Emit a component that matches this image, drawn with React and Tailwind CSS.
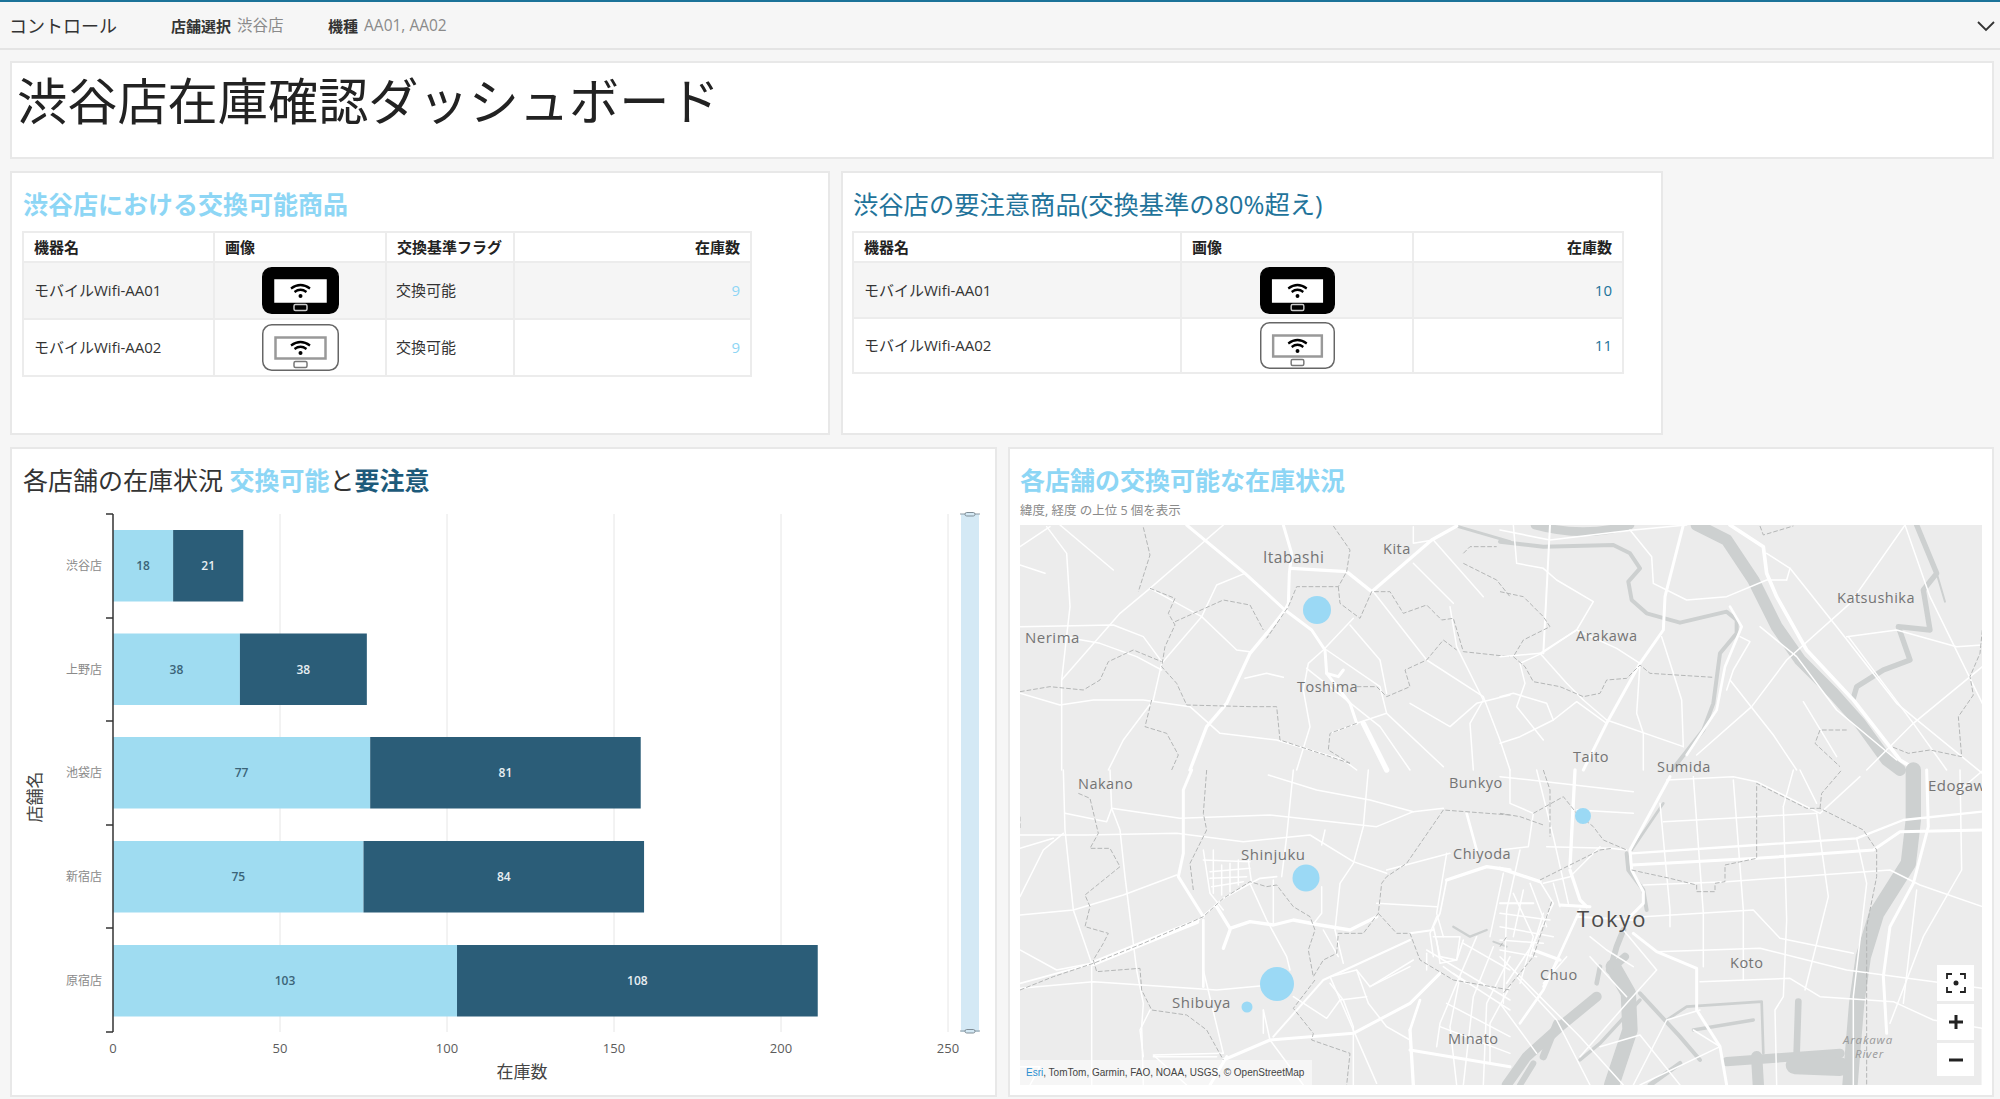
import React from "react";

const LIGHT = "#9fdcf1";
const DARK = "#2b5d78";

function Device({ dark, w = 77 }) {
  return (
    <svg width={w} height="47" viewBox="0 0 77 47" preserveAspectRatio="none" className="block mx-auto">
      <rect x="0.75" y="0.75" width="75.5" height="45.5" rx="9" fill={dark ? "#000" : "#fff"} stroke={dark ? "#000" : "#666"} strokeWidth="1.5" />
      <rect x="13.5" y="13.5" width="50" height="21" fill="#fff" stroke={dark ? "#fff" : "#999"} strokeWidth="2.5" />
      <path d="M29 21.5 Q38.5 14.5 48 21.5 M32.5 25 Q38.5 20.5 44.5 25" fill="none" stroke="#000" strokeWidth="2.2" />
      <circle cx="38.5" cy="29" r="2" fill="#000" />
      <rect x="32" y="37.5" width="13" height="6" rx="1.5" fill={dark ? "#000" : "#fff"} stroke={dark ? "#ccc" : "#777"} strokeWidth="1.5" />
    </svg>
  );
}

function Table({ cols, showFlag, qtyClass, rows, rowHs, iconW }) {
  return (
    <table className="border-collapse table-fixed text-[15px] text-[#333]" style={{ width: cols.reduce((a, b) => a + b, 0) }}>
      <colgroup>
        {cols.map((c, i) => (
          <col key={i} style={{ width: c }} />
        ))}
      </colgroup>
      <thead>
        <tr className="h-[30px]">
          <th className="border-2 border-[#ececec] px-[10px] text-left font-bold text-[15px] text-[#222]">機器名</th>
          <th className="border-2 border-[#ececec] px-[10px] text-left font-bold text-[15px] text-[#222]">画像</th>
          {showFlag && <th className="border-2 border-[#ececec] px-[10px] text-left font-bold text-[15px] text-[#222]">交換基準フラグ</th>}
          <th className="border-2 border-[#ececec] px-[10px] text-right font-bold text-[15px] text-[#222]">在庫数</th>
        </tr>
      </thead>
      <tbody>
        {rows.map((r, i) => (
          <tr key={i} className={i === 0 ? "bg-[#f5f5f5]" : "bg-white"} style={{ height: rowHs[i] }}>
            <td className="border-2 border-[#ececec] px-[10px] py-0">{r.name}</td>
            <td className="border-2 border-[#ececec] p-0">
              <Device dark={i === 0} w={iconW} />
            </td>
            {showFlag && <td className="border-2 border-[#ececec] px-[9px] py-0">交換可能</td>}
            <td className={`border-2 border-[#ececec] px-[10px] py-0 text-right ${qtyClass}`}>{r.qty}</td>
          </tr>
        ))}
      </tbody>
    </table>
  );
}

const stores = [
  ["渋谷店", 18, 21, 530],
  ["上野店", 38, 38, 633.5],
  ["池袋店", 77, 81, 737],
  ["新宿店", 75, 84, 841],
  ["原宿店", 103, 108, 945],
];

function Chart() {
  const X = (v) => 113 + v * 3.34;
  return (
    <svg width="960" height="590" viewBox="23 505 960 590" className="block ml-[11px] mt-[8px]" fontFamily="'Open Sans','Noto Sans CJK JP',sans-serif">
      {[50, 100, 150, 200, 250].map((v) => (
        <line key={v} x1={X(v)} x2={X(v)} y1="514" y2="1032" stroke="#e6e6e6" strokeWidth="1" />
      ))}
      {stores.map(([n, a, b, y]) => (
        <g key={n}>
          <rect x={X(0)} y={y} width={a * 3.34} height="71.5" fill={LIGHT} />
          <rect x={X(a)} y={y} width={b * 3.34} height="71.5" fill={DARK} />
          <text x={X(a / 2)} y={y + 40} textAnchor="middle" fontSize="12" fontWeight="600" fill="#3b6478">{a}</text>
          <text x={X(a + b / 2)} y={y + 40} textAnchor="middle" fontSize="12" fontWeight="600" fill="#e8eef2">{b}</text>
          <text x="102" y={y + 40} textAnchor="end" fontSize="12" fill="#8a8a8a">{n}</text>
        </g>
      ))}
      <path d="M113 514V1032" stroke="#333" strokeWidth="1.5" />
      {[514, 618, 721, 825, 928, 1032].map((y) => (
        <line key={y} x1="106" x2="113" y1={y} y2={y} stroke="#333" strokeWidth="1.5" />
      ))}
      {[0, 50, 100, 150, 200, 250].map((v) => (
        <text key={v} x={X(v)} y="1053" textAnchor="middle" fontSize="13" fill="#5c5c5c">{v}</text>
      ))}
      <text x="522" y="1078" textAnchor="middle" fontSize="17" fill="#444">在庫数</text>
      <text transform="translate(41 797) rotate(-90)" textAnchor="middle" fontSize="17" fill="#444">店舗名</text>
      <rect x="961" y="514" width="18" height="518" fill="#d4e9f5" />
      {[514, 1031].map((y) => (
        <g key={y}>
          <line x1="960" x2="980" y1={y} y2={y} stroke="#8a99a3" strokeWidth="1" />
          <rect x="965" y={y - 1.5} width="10" height="3.5" rx="1.7" fill="#d4e9f5" stroke="#7f8d96" strokeWidth="1" />
        </g>
      ))}
    </svg>
  );
}

const WATER = "#cdd0d0";
const z5 = {
  major: [
    ["M820 255L845 340L838 400L835 490L825 510L770 580", 9],
    ["M845 385L1010 395L1085 455L1265 300L1340 258", 10],
    ["M530 255L705 400L825 510L905 570L945 630L950 700L1020 790L1040 850", 9],
    ["M1060 850L1130 990", 16],
    ["M770 580L720 640L650 790L590 860L540 990", 10],
    ["M950 700L985 710L1000 690", 9],
  ],
  minor: [
    "M30 320L120 260","M110 260L170 340L180 500L155 720L155 990","M150 255L310 390","M30 375L105 400",
    "M640 255L420 445L330 520L155 720","M420 445L575 530L680 630L720 635","M30 560L310 555L400 590L455 665",
    "M160 590L270 610L380 650L455 690","M30 760L150 795L250 780L400 780L540 800L630 880L800 900L1000 960L1040 990",
    "M705 400L620 435L575 530L455 670L430 780L340 900L295 990","M705 715L770 700L820 712",
    "M950 630L1110 740L1130 820L1300 980","M1030 535L940 630L895 670L880 750L900 860L860 990",
    "M1130 820L1040 850L960 880","M1020 555L1110 660L1130 760","M1320 500L1340 620L1420 780L1380 850L1390 990",
    "M1090 455L1250 660L1420 770L1470 900L1500 990","M1210 370L1330 490","M1500 765L1400 790L1320 860L1200 790",
    "M1210 260V310L1270 300L1420 470","M890 685L1110 860L1200 990",
  ],
  dash: [
    "M400 262L420 345L385 455","M970 258L1020 330L1010 395L985 440L860 440L835 500L770 595",
    "M985 440L990 490L1050 535L1085 455L1140 455L1180 520L1250 495L1295 540L1330 535L1360 635L1500 650",
    "M420 445L495 475L475 520L495 555L465 620L455 680L500 730L530 795L720 800L800 800L810 900L1020 970",
    "M495 545L640 480L720 495L760 570","M30 755L120 740L220 750L270 720L295 665L370 630L455 665",
    "M425 780L405 860L470 880L505 945L485 990","M1360 340L1380 320L1460 320M1360 370L1460 420L1500 470",
    "M1040 740L1100 740L1130 770L1200 740L1185 690L1250 660L1300 600L1340 630","M1040 850L960 880L955 930L1020 970",
  ],
  water: [["M1345 260L1500 305", 9]],
};
const z6 = {
  water: [
    ["M590 255L680 300L760 420L830 560L900 660L1000 760L1080 850L1160 960L1200 990", 36],
    ["M0 305L130 320L340 315L390 340L420 385L385 425L395 480L440 520L540 548L680 515L710 540L710 580L660 640L640 790L610 870L520 985", 12],
    ["M105 255Q250 295 390 255", 26],
    ["M1250 255L1310 400L1270 450L1290 570L1195 560L1230 660L1150 690L1070 740L1060 775", 16],
    ["M1310 400L1335 485", 6],
  ],
  major: [
    ["M690 255L790 320L800 400L830 470L920 630L1060 780L1200 960L1250 990", 11],
    ["M550 255L495 470L490 570L420 670L320 850L250 990", 9],
    ["M560 945L650 810L675 680L725 560L690 500", 8],
    ["M150 255L130 640", 6],
    ["M0 270L150 300L400 270L560 255", 5],
  ],
  minor: [
    "M40 255L50 370L130 385L170 420L280 485L230 570L125 640L60 670","M390 270L455 350L460 430L560 480L680 470L800 420L860 420",
    "M800 340L870 385L860 420","M870 385L1010 560L1190 790L1447 1000","M1215 255L1050 490L860 660L755 800L590 945",
    "M1215 255L1290 470L1447 790","M1040 590L1190 570L1370 620L1447 615","M0 650L120 640L230 570L350 625L420 670",
    "M120 640L200 730L250 780L320 840L550 920","M0 770L40 760L140 790L160 840L230 785L320 850","M420 670L410 820L430 880L430 990",
    "M485 590L520 700L545 780L550 920","M690 720L820 885L890 990","M780 560L890 650L1010 810L1190 960","M1045 590L1240 850L1340 990",
    "M910 785L1010 950","M1447 680L1240 850L1100 990","M720 590L750 605L700 690L680 750","M60 670L75 730L50 800L130 900",
    "M0 910L60 890L160 840",
  ],
  dash: [
    "M0 455L70 470L130 530L150 560L70 600L40 650L75 680L100 725L180 740L250 770L300 760L320 720L380 715L420 675L450 700L640 712",
    "M1447 570L1440 640L1410 710L1420 765L1375 830L1385 950L1290 930L1225 940L1175 920",
    "M1040 870L960 870L945 910L1020 980","M780 258L790 285L880 258",
  ],
};
const z7 = {
  water: [["M1330 470L1380 500L1430 480", 7], ["M1450 515L1490 530", 6]],
  major: [
    ["M250 580L560 455", 15], ["M560 455L640 385L750 325L800 320", 5],
    ["M545 0L520 60L520 250L505 320L580 440", 9],
    ["M620 410L660 475L720 455L790 465L850 450L930 465L1020 480L1100 440", 10],
    ["M660 480L640 535", 10], ["M580 450L580 650", 8],
    ["M640 870L780 810L1030 790L1200 700L1290 610", 9],
    ["M790 800L940 630L1200 510", 6], ["M1200 780L1210 945", 10], ["M1200 840L1500 890", 9],
    ["M1310 330L1430 290L1500 300", 10], ["M1370 130L1400 240", 8], ["M30 640L250 580", 5],
    ["M1200 780L1230 690", 8], ["M600 945L650 860", 9],
    ["M1270 480L1200 490", 6],["M1310 330L1290 430L1270 470L1290 560L1340 570L1360 510",5],
  ],
  minor: [
    "M30 195H230L500 190L700 215L900 195L1030 275L1130 310","M30 235L130 205","M160 0L165 180L190 420L245 580L245 945",
    "M30 435L190 420L340 375L500 315","M30 540L140 600L245 580","M30 655L250 635L620 660L750 648","M165 130L290 155L305 115L510 145L780 135L1100 170L1210 125L1300 115",
    "M305 115L330 180L345 320L380 600L400 700L395 770L400 945","M30 380L100 240L160 190","M300 0L305 115","M850 0L830 200L815 320",
    "M775 15L920 60L1080 90L1210 125","M1075 0L1060 170L1030 280L990 340L975 480","M935 350V430L915 455","M945 180L935 225",
    "M720 340L770 450L830 560L840 600","M790 330L790 460","M1310 250L1280 430L1300 500","M1100 940L960 620L1040 600L1080 650L1200 590",
    "M960 640L1000 690L1030 770L1030 945","M1040 600L1075 700L1130 770L1200 810","M850 680L950 745L990 690L1070 680","M760 720L780 810L880 945",
    "M530 945L430 855L640 850","M580 600L640 850","M420 720L390 780L400 860","M1300 590L1370 640M1250 540L1500 690",
    "M1350 620L1320 770L1340 945","M1400 500L1340 640L1290 760L1280 830","M1450 530L1390 680L1360 945","M1500 560L1430 700L1420 945",
    "M1500 650L1440 760L1440 880","M1270 500H1350L1340 570L1290 580L1280 510","M1280 440L1260 490L1270 560","M610 240V370M635 285V375M660 280V365M685 270V345M715 270L725 340",
    "M580 270L720 275M600 305L720 295M600 325L710 320M605 350L700 335","M580 240L600 370L640 420","M1250 550V600","M30 890H90L60 945","M430 860L620 860",
    "M1360 520L1500 600","M1330 610L1500 720","M1310 700L1500 800","M1290 770L1500 850","M1480 310L1440 500","M1130 300L1320 250","M1100 400L1280 410",
    "M975 480L1000 580","M940 480L985 560","M1080 650L1210 570","M760 720L760 790",
  ],
  dash: [
    "M205 70L240 85L265 190L240 235L300 235L330 290L225 375L240 410L225 470L295 490L280 520L250 570L260 605L390 595L395 660L425 720L530 735L590 780L640 870",
    "M30 660L130 620L250 580L400 520L580 440L640 385L720 335L770 350L800 345L850 410L900 440L915 480L895 540L910 620L940 570L980 550L985 490L1060 490L1105 430L1115 340L1130 320L1190 280L1300 120L1500 135",
    "M590 0L580 130L590 180L540 280L550 360","M915 630L850 715L910 790L905 810L1020 850L1010 945",
    "M1105 430L1160 490L1200 490L1230 570L1330 630L1500 660","M30 140V180",
  ],
};
const z8 = {
  water: [
    ["M1240 0L1240 150L1225 280L1130 430L1090 560L1070 700L1050 945", 46],
    ["M20 945L80 860L180 770L290 680", 30], ["M330 600L375 560", 24],
    ["M340 590L385 670L390 780L335 945", 46], ["M370 480L350 530L330 600", 18],
    ["M420 670L540 800L600 870", 12], ["M500 750L560 710L785 695L790 850", 8], ["M580 780L760 750", 10],
    ["M895 695L890 850", 20], ["M680 875L1020 850", 28], ["M770 860L775 945", 34], ["M885 885L1020 890", 56],
    ["M170 760L130 860", 22], ["M300 590L290 640", 14], ["M240 870L300 820L420 690", 10],
    ["M490 100L395 240", 8], ["M380 250L385 300L430 360L440 420", 12], ["M540 880L450 945", 14], ["M100 880L60 945",18],
  ],
  major: [
    ["M225 0L210 290", 10], ["M210 300L240 390L260 410", 10], ["M0 295L120 335", 10], ["M180 405L270 410", 9],
    ["M510 20L390 240L395 300L430 365L430 400L380 450", 9], ["M400 490L470 545L590 595L590 720L660 830L680 945", 9],
    ["M395 250L770 225L1070 205L1210 150L1447 125", 7], ["M395 285L770 265L1120 240L1200 185L1447 180", 9],
    ["M1280 0L1285 170L1240 340L1170 470L1150 620L1160 790", 9], ["M240 420L130 660L60 760", 8], ["M400 450L230 440", 6],
    ["M100 540L180 570", 10], ["M175 570L130 650", 7], ["M0 400H100", 6],["M120 335L160 400L100 520L20 640",5],
  ],
  minor: [
    "M580 20L610 430L610 590","M700 30L730 420L730 630","M850 110L860 450L850 680L825 720L830 945","M950 130L985 380L915 660",
    "M1070 205L1100 340L1060 680L1060 945","M430 345L680 335L1170 300L1260 345L1447 410","M430 440L760 420L840 505L1060 550",
    "M470 545L780 535L1040 600L1447 655","M600 635L870 625L960 680L1180 695L1300 750L1447 775","M500 30L700 20L770 35L960 130",
    "M490 155L770 140L950 130","M30 0V100L100 130L85 230L0 240","M0 20L400 65","M140 230L330 235L380 240","M300 230L210 320L130 340",
    "M230 120L400 130","M110 0L160 200L205 400","M60 240L20 420L10 700","M1380 0L1385 300L1270 500L1170 760","M1450 0L1380 60",
    "M880 0L850 110","M900 0L950 100","M1080 20L960 130","M370 480L470 600L380 700L240 860","M270 560L380 680","M0 560L240 800L370 945",
    "M50 620L170 750L270 945","M0 700L110 850","M300 830L420 795L540 945","M600 720L500 750L400 945","M580 780L660 830L420 945","M1447 775V945","M1250 360L1210 700",
    "M510 470L510 420L480 100","M130 640L200 560","M0 470L160 500M0 540L110 560","M40 370L100 500L60 640","M90 340L140 470","M160 340L180 410",
    "M270 500L320 540L400 590","M0 430L150 450","M0 510L130 520","M70 360L40 500","M130 430L90 560",
  ],
  dash: [
    "M100 130L190 80L230 130L280 170L310 210L380 240","M130 0L150 60V200","M0 130L60 140L130 165","M120 330L300 240L335 235",
    "M395 300L440 310L510 325L590 345V365H645V340L675 335V285L770 265V40L920 115L960 115L1090 180L1130 240L1130 320L1100 470L1100 945",
    "M960 115L965 70L1025 0","M155 395L100 560L10 670","M0 530L20 500",
  ],
};
const z = [
  [z5, 1010, 440], [z6, 1500, 440], [z7, 1010, 770], [z8, 1500, 770],
];

const labels = [
  ["Itabashi", 1263, 563, 15.5],["Kita", 1383, 554, 14.5],["Nerima", 1025, 643, 15],["Toshima", 1297, 692, 14.5],
  ["Katsushika", 1837, 603, 14.5],["Arakawa", 1576, 641, 14.5],["Taito", 1573, 762, 14.5],["Sumida", 1657, 772, 14.5],
  ["Nakano", 1078, 789, 14.5],["Bunkyo", 1449, 788, 14.5],["Shinjuku", 1241, 860, 15],["Chiyoda", 1453, 859, 14.5],
  ["Shibuya", 1172, 1008, 15],["Minato", 1448, 1044, 14.5],["Chuo", 1540, 980, 14.5],["Koto", 1730, 968, 14.5],["Edogawa", 1928, 791, 15],
];

function MapArt() {
  return (
    <svg width="962" height="560" viewBox="1020 525 962 560" className="block bg-[#ececec]" fontFamily="'Open Sans','Noto Sans',sans-serif">
      {z.map(([m, x, y], i) => (
        <g key={i} transform={`translate(${x} ${y}) scale(.33333)`} fill="none" strokeLinejoin="round" strokeLinecap="round">
          {(m.water || []).map(([d, w], k) => <path key={k} d={d} stroke={WATER} strokeWidth={w} />)}
          {m.minor.map((d, k) => <path key={k} d={d} stroke="#fff" strokeWidth="4.5" />)}
          {m.major.map(([d, w], k) => <path key={k} d={d} stroke="#fff" strokeWidth={w} />)}
          {m.dash.map((d, k) => <path key={k} d={d} stroke="#b4b6b6" strokeWidth="3" strokeDasharray="14 6" strokeLinecap="butt" />)}
        </g>
      ))}
      {labels.map(([t, x, y, s]) => (
        <text key={t} x={x} y={y} fontSize={s} fill="#747474" letterSpacing=".5">{t}</text>
      ))}
      <text x="1577" y="927" fontSize="22" fill="#4a4a4a" letterSpacing="1.8">Tokyo</text>
      <text x="1843" y="1044" fontSize="11.5" fontStyle="italic" fill="#9a9a9a" letterSpacing=".8">Arakawa</text>
      <text x="1855" y="1058" fontSize="11.5" fontStyle="italic" fill="#9a9a9a" letterSpacing=".8">River</text>
      {[[1317, 610, 14], [1306, 878, 13.5], [1277, 984, 17], [1247, 1007, 5.5], [1583, 816, 8]].map(([x, y, r]) => (
        <circle key={x} cx={x} cy={y} r={r} fill="#9bd9f5" />
      ))}
    </svg>
  );
}

function MapBtn({ children, cls }) {
  return <div className={`w-[37px] bg-white flex items-center justify-center ${cls}`}>{children}</div>;
}

export default function App() {
  return (
    <div className="w-[2000px] h-[1099px] overflow-hidden bg-[#f6f6f6] font-['Open_Sans','Noto_Sans_CJK_JP',sans-serif] text-[#222]">
      <header className="h-[50px] border-t-2 border-t-[#1c7399] border-b-2 border-b-[#e4e4e4] flex items-center pl-[9px] pr-[4px] pt-[2px]">
        <span className="text-[18px] text-[#333] w-[162px]">コントロール</span>
        <span className="text-[15px] font-bold text-[#333] mr-[6px]">店舗選択</span>
        <span className="text-[15.5px] text-[#8a8a8a] w-[91px]">渋谷店</span>
        <span className="text-[15px] font-bold text-[#333] mr-[6px]">機種</span>
        <span className="text-[15.5px] text-[#8a8a8a]">AA01, AA02</span>
        <svg width="20" height="12" viewBox="0 0 20 12" className="ml-auto">
          <path d="M2 2l8 8 8-8" fill="none" stroke="#333" strokeWidth="1.8" />
        </svg>
      </header>

      <section className="ml-[10px] mt-[11px] w-[1984px] h-[98px] bg-white border-2 border-[#e8e8e8] pl-[5px] pt-[3px]">
        <h1 className="text-[50.2px] leading-[70px] font-normal text-[#222]">渋谷店在庫確認ダッシュボード</h1>
      </section>

      <div className="ml-[10px] mt-[12px] flex gap-[11px] h-[264px]">
        <section className="w-[820px] bg-white border-2 border-[#e8e8e8] pl-[10px] pt-[14px]">
          <h2 className="text-[25px] leading-[34px] font-bold text-[#8dd6f5] mb-[10px] ml-[1px]">渋谷店における交換可能商品</h2>
          <Table cols={[191, 172, 128, 237]} showFlag qtyClass="text-[#8dd6f5]" rowHs={[57, 57]} rows={[{ name: "モバイルWifi-AA01", qty: 9 }, { name: "モバイルWifi-AA02", qty: 9 }]} />
        </section>
        <section className="w-[822px] bg-white border-2 border-[#e8e8e8] pl-[9px] pt-[14px]">
          <h2 className="text-[25.3px] leading-[34px] text-[#22739a] mb-[10px] ml-[1px]">渋谷店の要注意商品(交換基準の80%超え)</h2>
          <Table cols={[328, 232, 210]} iconW={75} qtyClass="text-[#22739a]" rowHs={[56, 55]} rows={[{ name: "モバイルWifi-AA01", qty: 10 }, { name: "モバイルWifi-AA02", qty: 11 }]} />
        </section>
      </div>

      <div className="ml-[10px] mt-[12px] flex gap-[11px] h-[650px]">
        <section className="w-[987px] bg-white border-2 border-[#e8e8e8] overflow-hidden">
          <h2 className="pl-[11px] pt-[14px] text-[25px] leading-[34px] text-[#333]">
            各店舗の在庫状況 <span className="font-bold text-[#8dd6f5]">交換可能</span>と<span className="font-bold text-[#1d5a7a]">要注意</span>
          </h2>
          <Chart />
        </section>
        <section className="w-[986px] bg-white border-2 border-[#e8e8e8] overflow-hidden">
          <h2 className="pl-[10px] pt-[14px] text-[25px] leading-[34px] font-bold text-[#8dd6f5]">各店舗の交換可能な在庫状況</h2>
          <p className="pl-[10px] mt-[6px] text-[12.5px] leading-[16px] text-[#8a8a8a]">緯度, 経度 の上位 5 個を表示</p>
          <div className="relative ml-[10px] mt-[6px] w-[962px] h-[560px] overflow-hidden">
            <MapArt />
            <div className="absolute left-0 bottom-0 h-[25px] w-[292px] bg-white/50 pl-[6px] text-[10px] leading-[25px] whitespace-nowrap font-['Liberation_Sans',sans-serif] text-[#444]">
              <span className="text-[#2a8fd0]">Esri</span>, TomTom, Garmin, FAO, NOAA, USGS, © OpenStreetMap
            </div>
            <div className="absolute left-[917px] top-[440px] flex flex-col gap-[3px]">
              <MapBtn cls="h-[36px]">
                <svg width="20" height="20" viewBox="0 0 20 20" fill="none" stroke="#222" strokeWidth="1.8">
                  <path d="M1 6V1h5M14 1h5v5M19 14v5h-5M6 19H1v-5" />
                  <circle cx="10" cy="10" r="2.5" fill="#222" stroke="none" />
                </svg>
              </MapBtn>
              <MapBtn cls="h-[36px]">
                <svg width="16" height="16" viewBox="0 0 16 16"><path d="M8 1v14M1 8h14" stroke="#222" strokeWidth="3" /></svg>
              </MapBtn>
              <MapBtn cls="h-[33px]">
                <svg width="16" height="16" viewBox="0 0 16 16"><path d="M1 8h14" stroke="#222" strokeWidth="3" /></svg>
              </MapBtn>
            </div>
          </div>
        </section>
      </div>
    </div>
  );
}
